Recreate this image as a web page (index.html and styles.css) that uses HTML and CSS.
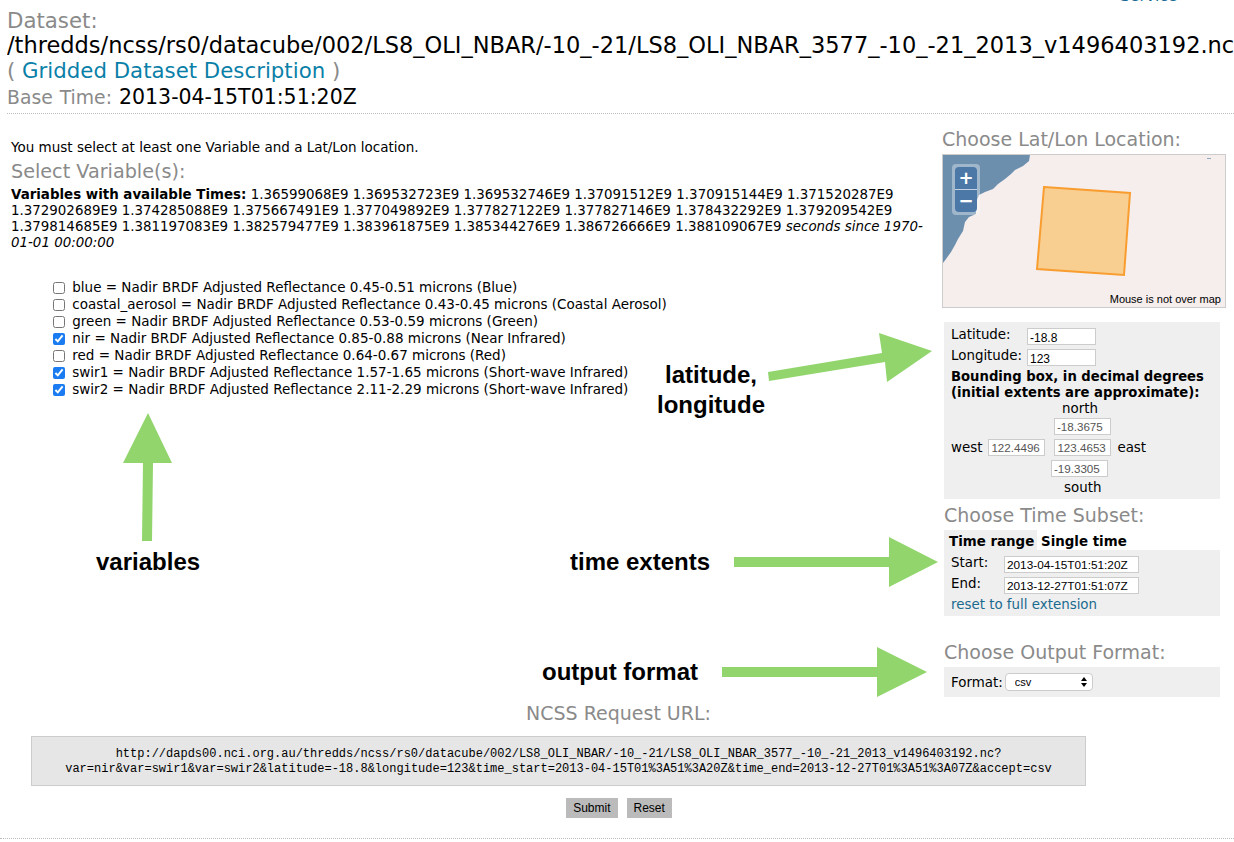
FILE: index.html
```html
<!DOCTYPE html>
<html lang="en">
<head>
  <meta charset="UTF-8" />
  <title>NCSS Grid as Point</title>
  <link rel="stylesheet" href="styles.css">
</head>

<body>
  <div class="top-link"><a href="#">Service</a></div>

  <div class="header">
    <h2 class="dataset">Dataset:<br><span class="value">/thredds/ncss/rs0/datacube/002/LS8_OLI_NBAR/-10_-21/LS8_OLI_NBAR_3577_-10_-21_2013_v1496403192.nc</span></h2>
    <h2 class="dataset">( <a href="#">Gridded Dataset Description</a> )</h2>
    <h3 class="base-time">Base Time: <span class="value">2013-04-15T01:51:20Z</span></h3>
  </div>

  <form class="main">
    <div class="left-col">
      <p class="must-select">You must select at least one Variable and a Lat/Lon location.</p>
      <h3 class="section-title">Select Variable(s):</h3>
      <p class="times"><b>Variables with available Times:</b> 1.36599068E9 1.369532723E9 1.369532746E9 1.37091512E9 1.370915144E9 1.371520287E9 1.372902689E9 1.374285088E9 1.375667491E9 1.377049892E9 1.377827122E9 1.377827146E9 1.378432292E9 1.379209542E9 1.379814685E9 1.381197083E9 1.382579477E9 1.383961875E9 1.385344276E9 1.386726666E9 1.388109067E9 <i>seconds since 1970-01-01 00:00:00</i></p>

      <ul class="var-list">
        <li><input type="checkbox"> blue = Nadir BRDF Adjusted Reflectance 0.45-0.51 microns (Blue)</li>
        <li><input type="checkbox"> coastal_aerosol = Nadir BRDF Adjusted Reflectance 0.43-0.45 microns (Coastal Aerosol)</li>
        <li><input type="checkbox"> green = Nadir BRDF Adjusted Reflectance 0.53-0.59 microns (Green)</li>
        <li><input type="checkbox" checked> nir = Nadir BRDF Adjusted Reflectance 0.85-0.88 microns (Near Infrared)</li>
        <li><input type="checkbox"> red = Nadir BRDF Adjusted Reflectance 0.64-0.67 microns (Red)</li>
        <li><input type="checkbox" checked> swir1 = Nadir BRDF Adjusted Reflectance 1.57-1.65 microns (Short-wave Infrared)</li>
        <li><input type="checkbox" checked> swir2 = Nadir BRDF Adjusted Reflectance 2.11-2.29 microns (Short-wave Infrared)</li>
      </ul>
    </div>

    <div class="right-col">
      <h3 class="side-title first">Choose Lat/Lon Location:</h3>
      <div class="map">
        <svg width="282" height="152" viewBox="0 0 282 152">
          <rect width="282" height="152" fill="#f5eeec" />
          <path d="M0 0H87L86 6 80 11 72 15 68 19 62 24 55 29 50 34 42 37 36 40 33 47 33 59 26 62 22 67 20 76 15 84 12 90 8 97 3 104 0 108Z" fill="#6d8fae" />
          <path d="M101 32 187 38 181 120 94 114Z" fill="#f8cf90" stroke="#f99d30" stroke-width="2" />
          <path d="M264 3h4v1h-4z" fill="#8fa8bf" />
        </svg>
        <div class="zoom-ctl">
          <span class="zoom-btn">+</span>
          <span class="zoom-btn minus">&minus;</span>
        </div>
        <div class="mouse-pos">Mouse is not over map</div>
      </div>

      <div class="panel lat-lon">
        <div class="row"><label>Latitude:</label><input class="coord" type="text" value="-18.8"></div>
        <div class="row"><label>Longitude:</label><input class="coord" type="text" value="123"></div>
        <b class="bbox-title">Bounding box, in decimal degrees<br>(initial extents are approximate):</b>
        <div class="bbox">
          <div class="north">north</div>
          <input class="box-input north-in" type="text" value="-18.3675">
          <div class="bbox-mid">
            <span>west</span>
            <input class="box-input" type="text" value="122.4496">
            <input class="box-input" type="text" value="123.4653">
            <span>east</span>
          </div>
          <input class="box-input south-in" type="text" value="-19.3305">
          <div class="south">south</div>
        </div>
      </div>

      <h3 class="side-title time-title">Choose Time Subset:</h3>
      <div class="tabs"><span class="tab on">Time range</span><span class="tab">Single time</span></div>
      <div class="panel time">
        <div class="row"><label>Start:</label><input class="time-in" type="text" value="2013-04-15T01:51:20Z"></div>
        <div class="row"><label>End:</label><input class="time-in" type="text" value="2013-12-27T01:51:07Z"></div>
        <a href="#">reset to full extension</a>
      </div>

      <h3 class="side-title format-title">Choose Output Format:</h3>
      <div class="panel format">
        <label>Format:</label>
        <select class="format-sel"><option>csv</option></select>
      </div>
    </div>

    <div class="request">
      <h3 class="url-title">NCSS Request URL:</h3>
      <div class="url-box">http://dapds00.nci.org.au/thredds/ncss/rs0/datacube/002/LS8_OLI_NBAR/-10_-21/LS8_OLI_NBAR_3577_-10_-21_2013_v1496403192.nc?<br>var=nir&amp;var=swir1&amp;var=swir2&amp;latitude=-18.8&amp;longitude=123&amp;time_start=2013-04-15T01%3A51%3A20Z&amp;time_end=2013-12-27T01%3A51%3A07Z&amp;accept=csv</div>
      <div class="buttons">
        <button type="button">Submit</button>
        <button type="button">Reset</button>
      </div>
    </div>
  </form>
  <div class="footer-rule"></div>

  <!-- annotations drawn on top of the screenshot -->
  <svg class="arrows" width="1234" height="842" viewBox="0 0 1234 842">
    <g fill="#91d56c">
      <path d="M768 372 882 353 879 333 932 351 887 382 885 362 769 381Z" />
      <path d="M142 541 143 463H123L148 413 172 463H153L152 541Z" />
      <path d="M734 557H889V537L938 562 889 587V567H734Z" />
      <path d="M722 667H877V647L927 672 877 697V677H722Z" />
    </g>
  </svg>
  <div class="note note-lat">latitude,<br>longitude</div>
  <div class="note note-vars">variables</div>
  <div class="note note-time">time extents</div>
  <div class="note note-format">output format</div>
</body>
</html>
```

FILE: styles.css
```css
html,
body {
  margin: 0;
  padding: 0;
}

body {
  font-family: "DejaVu Sans", Verdana, sans-serif;
  font-size: 13.4px;
  color: #000;
  background: #fff;
  position: relative;
  height: 842px;
  overflow: hidden;
}

a {
  color: #0a7fa8;
  text-decoration: none;
}

.top-link {
  height: 3px;
  overflow: hidden;
  padding-left: 1120px;
  font-size: 15.5px;
}

.top-link a {
  display: block;
  line-height: 3px;
  margin-top: -5px;
  color: #1a6a96;
}

.header {
  margin: 0 0 0 7px;
  height: 110px;
  border-bottom: 1px dotted #bbb;
  white-space: nowrap;
  overflow: hidden;
}

.dataset {
  margin: 0;
  font-size: 21.3px;
  font-weight: normal;
  line-height: 25px;
  color: #8a8a8a;
  padding-top: 5px;
}

.dataset + .dataset {
  padding-top: 0;
}

.dataset .value {
  color: #000;
  font-size: 22.5px;
}

.base-time {
  margin: 2px 0 0;
  font-size: 18.8px;
  font-weight: normal;
  line-height: 25px;
  color: #8a8a8a;
  word-spacing: 1px;
}

.base-time .value {
  color: #000;
  font-size: 20.5px;
}

.main {
  display: grid;
  grid-template-columns: 930px 1fr;
  grid-template-rows: 587px auto;
}

.left-col {
  padding: 25px 0 0 11px;
}

.must-select {
  margin: 0;
  font-size: 13.5px;
  line-height: 16px;
}

.section-title {
  margin: 5px 0 0;
  font-size: 19.2px;
  font-weight: normal;
  line-height: 24px;
  color: #8a8a8a;
}

.times {
  margin: 3px 0 0;
  line-height: 16px;
  width: 916px;
}

.var-list {
  list-style: none;
  margin: 28px 0 0 42px;
  padding: 0;
  font-size: 13.5px;
}

.var-list li {
  height: 17px;
  line-height: 17px;
  white-space: nowrap;
}

.var-list input {
  width: 12px;
  height: 12px;
  margin: 0 3px 0 0;
  vertical-align: -2px;
  accent-color: #1a7cf0;
}

.right-col {
  padding: 13px 0 0 12px;
  width: 284px;
}

.side-title {
  margin: 0;
  font-size: 19px;
  font-weight: normal;
  line-height: 24px;
  color: #8a8a8a;
  padding-left: 2px;
}

.side-title.first {
  padding-left: 0;
}

.map {
  position: relative;
  width: 282px;
  height: 152px;
  border: 1px solid #ccc;
  margin-top: 3px;
}

.map svg {
  display: block;
}

.zoom-ctl {
  position: absolute;
  left: 9px;
  top: 9px;
  width: 22px;
  padding: 3px;
  background: rgba(255, 255, 255, 0.35);
  border-radius: 4px;
}

.zoom-btn {
  display: block;
  height: 22px;
  line-height: 21px;
  text-align: center;
  color: #fff;
  font-size: 18px;
  font-weight: bold;
  background: #4c78a8;
  border-radius: 4px 4px 0 0;
  border-bottom: 1px solid #c5d2e0;
}

.zoom-btn.minus {
  border-radius: 0 0 4px 4px;
  border-bottom: 0;
}

.mouse-pos {
  position: absolute;
  right: 4px;
  bottom: 1px;
  font-family: "Liberation Sans", Arial, sans-serif;
  font-size: 11px;
  line-height: 13px;
}

.panel {
  background: #efefef;
  width: 276px;
  margin-left: 2px;
  box-sizing: border-box;
  padding-left: 7px;
}

.lat-lon {
  margin-top: 14px;
  height: 177px;
  padding-top: 4px;
}

.row {
  display: flex;
  height: 21px;
  line-height: 18px;
}

.row label {
  width: 76px;
}

.coord {
  width: 69px;
  height: 17px;
  box-sizing: border-box;
  border: 1px solid #ccc;
  padding: 2px 2px 0;
  margin: 2px 0 0;
  font-family: "Liberation Sans", Arial, sans-serif;
  font-size: 12px;
}

.bbox-title {
  display: block;
  margin-top: 1px;
  font-size: 13.2px;
  line-height: 16px;
  white-space: nowrap;
}

.bbox {
  display: flex;
  flex-direction: column;
  align-items: flex-start;
}

.north,
.south {
  line-height: 16px;
  height: 16px;
}

.north {
  margin-left: 111px;
}

.south {
  margin-left: 113px;
}

.box-input {
  width: 57px;
  height: 17px;
  box-sizing: border-box;
  border: 1px solid #ccc;
  padding: 0 2px;
  margin: 0;
  font-family: "Liberation Sans", Arial, sans-serif;
  font-size: 11.6px;
  color: #555;
}

.north-in {
  margin: 1px 0 0 103px;
}

.bbox-mid {
  display: flex;
  align-items: center;
  height: 21px;
  margin-top: 2px;
  gap: 6px;
}

.bbox-mid .box-input + .box-input {
  margin-left: 3px;
}

.south-in {
  margin: 2px 0 3px 100px;
}

.time-title {
  margin-top: 4px;
}

.format-title {
  margin-top: 24px;
}

.tabs {
  display: flex;
  margin: 3px 0 0 2px;
  height: 20px;
  line-height: 24px;
  white-space: nowrap;
  font-weight: bold;
}

.tab {
  padding: 0 4px;
}

.tab.on {
  background: #efefef;
  width: 93px;
  box-sizing: border-box;
  padding-left: 5px;
}

.time {
  height: 66px;
  padding-top: 4px;
}

.time a {
  display: block;
  margin-top: 1px;
  color: #1a6a8e;
  line-height: 16px;
}

.time .row label {
  width: 53px;
}

.time-in {
  width: 135px;
  height: 17px;
  box-sizing: border-box;
  border: 1px solid #ccc;
  padding: 0 2px;
  margin: 2px 0 0;
  font-family: "Liberation Sans", Arial, sans-serif;
  font-size: 11.8px;
}

.format {
  height: 30px;
  display: flex;
  align-items: center;
  margin-top: 3px;
  gap: 2px;
}

.format-sel {
  appearance: none;
  width: 88px;
  height: 18px;
  font-family: "Liberation Sans", Arial, sans-serif;
  font-size: 11px;
  border: 1px solid #ccc;
  border-radius: 4px;
  padding-left: 9px;
  background: #fff url("data:image/svg+xml,%3Csvg xmlns='http://www.w3.org/2000/svg' width='6' height='10'%3E%3Cpath d='M3 0 6 4H0ZM3 10 0 6H6Z'/%3E%3C/svg%3E") no-repeat right 5px center;
}

.request {
  grid-column: 1 / 3;
  padding-left: 31px;
}

.url-title {
  margin: 0;
  width: 1175px;
  text-align: center;
  font-size: 19px;
  font-weight: normal;
  line-height: 24px;
  color: #8a8a8a;
}

.url-box {
  margin-top: 11px;
  width: 1055px;
  height: 50px;
  box-sizing: border-box;
  background: #e6e6e6;
  border: 1px solid #ccc;
  font-family: "Liberation Mono", "Courier New", monospace;
  font-size: 12px;
  line-height: 15px;
  text-align: center;
  padding-top: 10px;
}

.buttons {
  display: flex;
  justify-content: center;
  gap: 9px;
  margin-top: 12px;
  width: 1176px;
}

.buttons button {
  height: 20px;
  border: 1px solid #bbb;
  background: #bbb;
  font-family: "Liberation Sans", Arial, sans-serif;
  font-size: 12px;
  padding: 0 6px;
}

.footer-rule {
  position: absolute;
  left: 0;
  right: 0;
  top: 838px;
  border-top: 1px dotted #bbb;
}

.arrows {
  position: absolute;
  left: 0;
  top: 0;
  pointer-events: none;
}

.note {
  position: absolute;
  font-family: "Liberation Sans", Arial, sans-serif;
  font-size: 24px;
  font-weight: bold;
  line-height: 30px;
  text-align: center;
  white-space: nowrap;
}

.note-lat {
  left: 657px;
  top: 360px;
}

.note-vars {
  left: 96px;
  top: 547px;
}

.note-time {
  left: 570px;
  top: 547px;
}

.note-format {
  left: 542px;
  top: 657px;
}
```
